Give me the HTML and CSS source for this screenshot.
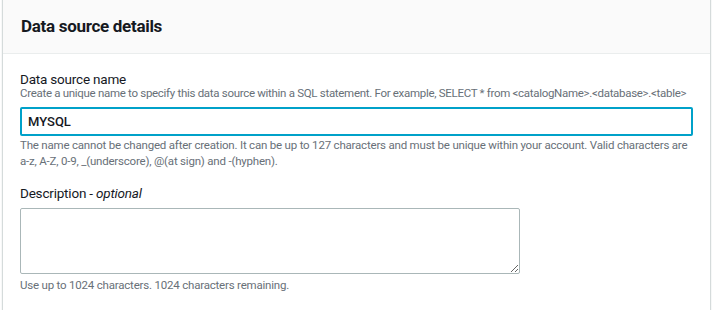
FILE: index.html
```html
<!DOCTYPE html>
<html lang="en">
<head>
  <meta charset="UTF-8">
  <title>Data source details</title>
  <link rel="stylesheet" href="styles.css">
</head>
<body>
  <div class="card">
    <div class="card-header">
      <h2>Data source details</h2>
    </div>
    <div class="card-body">
      <div class="field">
        <label for="ds-name">Data source name</label>
        <div class="field-desc">Create a unique name to specify this data source within a SQL statement. For example, SELECT * from &lt;catalogName&gt;.&lt;database&gt;.&lt;table&gt;</div>
        <input id="ds-name" class="text-input" type="text" value="MYSQL">
        <div class="field-hint">The name cannot be changed after creation. It can be up to 127 characters and must be unique within your account. Valid characters are a-z, A-Z, 0-9, _(underscore), @(at sign) and -(hyphen).</div>
      </div>
      <div class="field field-desc-box">
        <label for="ds-desc">Description - <i>optional</i></label>
        <textarea id="ds-desc" class="text-area"></textarea>
        <div class="field-hint">Use up to 1024 characters. 1024 characters remaining.</div>
      </div>
    </div>
  </div>
</body>
</html>
```

FILE: styles.css
```css
body {
  margin: 0;
  background: #ffffff;
  font-family: Roboto, 'Liberation Sans', Arial, sans-serif;
  color: #16191f;
}

.card {
  width: 709px;
  margin-left: 2px;
  margin-top: -1px;
  box-sizing: border-box;
  background: #ffffff;
  border: 1px solid #d5dbdb;
  border-top-color: #eaeded;
  box-shadow: 0 1px 1px 0 rgba(0, 28, 36, 0.2);
}

.card-header {
  background: #fafafa;
  border-bottom: 1px solid #eaeded;
  padding: 15px 18px 16px;
}

.card-header h2 {
  margin: 0;
  font-size: 17px;
  line-height: 22px;
  font-weight: 700;
  letter-spacing: -0.3px;
}

.card-body {
  padding: 17px 17px 18px;
}

.field label {
  display: block;
  font-size: 13.5px;
  line-height: 16px;
  letter-spacing: -0.2px;
}

.field-desc {
  font-size: 11.5px;
  line-height: 12px;
  letter-spacing: -0.3px;
  color: #687078;
  white-space: nowrap;
}

.text-input {
  display: block;
  width: 100%;
  box-sizing: border-box;
  height: 29px;
  margin-top: 8px;
  padding: 0 6px;
  border: 2px solid #00a1c9;
  border-radius: 2px;
  font-family: inherit;
  font-size: 13px;
  font-weight: 500;
  color: #16191f;
  outline: none;
}

.field-hint {
  font-size: 11.5px;
  line-height: 16px;
  letter-spacing: -0.2px;
  color: #687078;
  margin-top: 1px;
}

.field-desc-box {
  margin-top: 16px;
}

.text-area {
  display: block;
  width: 500px;
  height: 66px;
  box-sizing: border-box;
  margin-top: 7px;
  border: 1px solid #aab7b8;
  border-radius: 2px;
  font-family: inherit;
  resize: both;
}

.field-desc-box .field-hint {
  margin-top: 3px;
}
```
